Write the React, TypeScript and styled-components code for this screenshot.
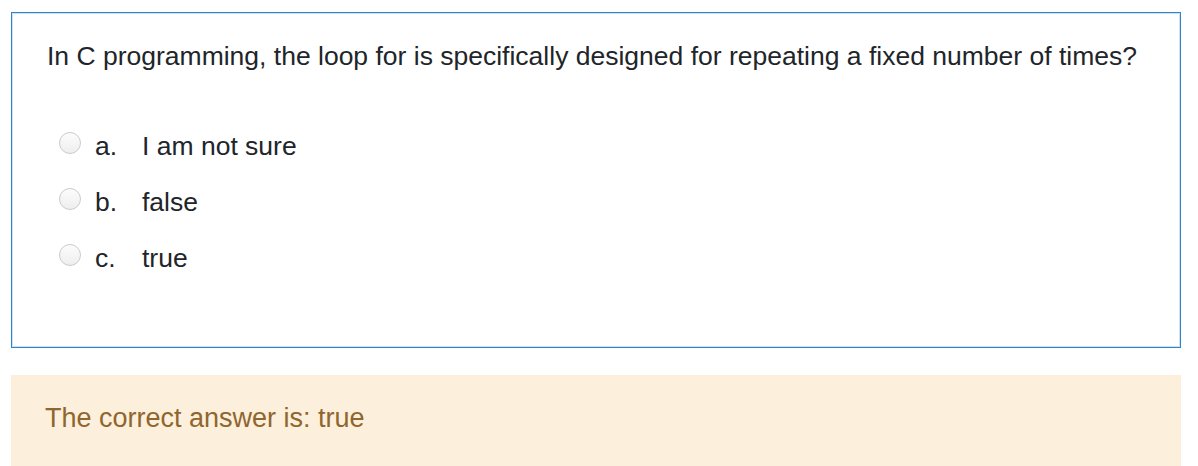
import React from 'react';
import styled, { createGlobalStyle } from 'styled-components';

const GlobalStyle = createGlobalStyle`
  html, body {
    margin: 0;
    padding: 0;
    background: #ffffff;
  }
  body {
    font-family: 'Liberation Sans', Arial, sans-serif;
    color: #1d2125;
  }
`;

const Page = styled.div`
  padding: 12px 17px 0 11px;
  display: flex;
  flex-direction: column;
  gap: 27px;
`;

const Formulation = styled.div`
  border: 1px solid #2f84c9;
  box-shadow: inset 0 0 0 1px #cfe2f2;
  background: #ffffff;
  padding: 23px 35px 0 35px;
  height: 336px;
  box-sizing: border-box;
`;

const QuestionText = styled.p`
  margin: 0 0 50px;
  font-size: 26.5px;
  line-height: 40px;
  color: #212529;
  white-space: nowrap;
`;

const Answers = styled.div`
  display: flex;
  flex-direction: column;
  gap: 16px;
  padding-left: 12px;
`;

const Option = styled.label`
  display: flex;
  align-items: center;
  height: 40px;
  font-size: 26.5px;
  color: #212529;
`;

const Radio = styled.span`
  align-self: flex-start;
  margin-top: 6px;
  width: 22px;
  height: 22px;
  border-radius: 50%;
  border: 1px solid #cbcbcb;
  background: linear-gradient(#fcfcfc, #eeeeee);
  box-sizing: border-box;
  flex: none;
  margin-right: 14px;
`;

const Letter = styled.span`
  width: 47px;
  flex: none;
`;

const Feedback = styled.div`
  background: #fcefdc;
  color: #8e662e;
  font-size: 27px;
  line-height: 40px;
  padding: 23px 34px 30px;
`;

const options = [
  { letter: 'a.', text: 'I am not sure' },
  { letter: 'b.', text: 'false' },
  { letter: 'c.', text: 'true' },
];

export default function App(): React.ReactElement {
  return (
    <>
      <GlobalStyle />
      <Page>
        <Formulation>
          <QuestionText>
            In C programming, the loop for is specifically designed for repeating a fixed number of times?
          </QuestionText>
          <Answers>
            {options.map((o) => (
              <Option key={o.letter}>
                <Radio />
                <Letter>{o.letter}</Letter>
                {o.text}
              </Option>
            ))}
          </Answers>
        </Formulation>
        <Feedback>The correct answer is: true</Feedback>
      </Page>
    </>
  );
}
